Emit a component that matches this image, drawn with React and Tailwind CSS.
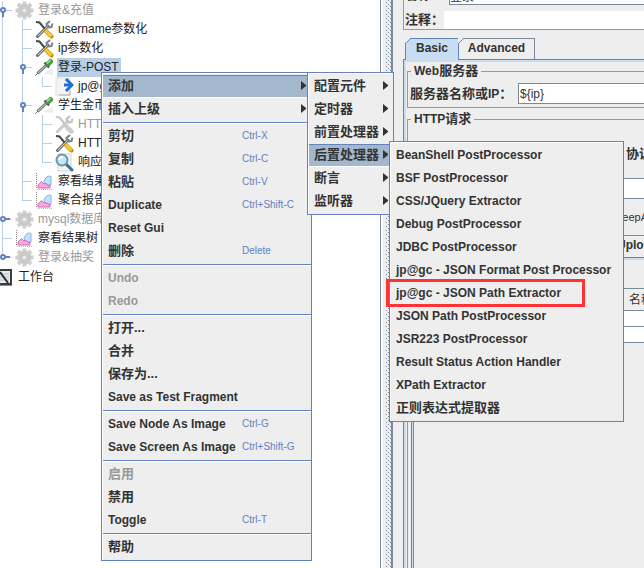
import clsx from "clsx";

/* ---------- tree icons ---------- */

const GearIcon = () => (
  <svg width="19" height="19" viewBox="0 0 19 19">
    <g stroke="#cfcfcf" strokeWidth="4">
      <path d="M9.500 0.500V18.500M0.500 9.500H18.500M3 3L16 16M16 3L3 16" />
    </g>
    <circle cx="9.500" cy="9.500" r="7" fill="#cfcfcf" />
    <circle cx="9.500" cy="9.500" r="5" fill="none" stroke="#c2c2c2" />
    <circle cx="9.500" cy="9.500" r="2.500" fill="#ececec" stroke="#c2c2c2" />
  </svg>
);

const ToolsIcon = ({ disabled }) => (
  <svg width="19" height="19" viewBox="0 0 19 19" fill="none">
    <path d="M9 15L15 18L18 13Z" fill="#efefef" />
    <path
      d="M2.500 16.500L13 6"
      stroke={disabled ? "#c4c4c4" : "#6a6e71"}
      strokeWidth="3"
      strokeLinecap="round"
    />
    <path
      d="M12 7L11.500 4L15 1M13 7.500L16.500 7L17.500 3.500"
      stroke={disabled ? "#c0c0c0" : "#7d8285"}
      strokeWidth="2"
    />
    <path d="M3 16L12.500 6.500" stroke={disabled ? "#dddddd" : "#d2d6d8"} />
    <path
      d="M1 2L4.500 2.500L9.500 8.500"
      stroke={disabled ? "#c4c4c4" : "#45484a"}
      strokeWidth="2"
    />
    <path
      d="M11 11L16.500 16.500"
      stroke={disabled ? "#c4c4c4" : "#b98a1c"}
      strokeWidth="4"
      strokeLinecap="round"
    />
    <path
      d="M10.500 10.500L16.500 16.500"
      stroke={disabled ? "#cecece" : "#fbcb22"}
      strokeWidth="3"
    />
  </svg>
);

const DropperIcon = () => (
  <svg width="19" height="19" viewBox="0 0 19 19" fill="none">
    <path d="M8 16L18 10V17Z" fill="#eeeeee" />
    <path d="M0.500 17.500L3 15" stroke="#777777" strokeLinecap="round" />
    <path d="M2.500 15.500L11 7.500" stroke="#6c756e" strokeWidth="3" />
    <path d="M3 15L11 7.500" stroke="#d5dfd6" />
    <path d="M9.500 4.500L14 9.500" stroke="#3a453b" strokeWidth="2" />
    <path
      d="M13 6L15.500 3.500"
      stroke="#4a9444"
      strokeWidth="5"
      strokeLinecap="round"
    />
    <path d="M12.500 5L15 2.500" stroke="#93d184" strokeLinecap="round" strokeWidth="2" />
  </svg>
);

const ExtractIcon = () => (
  <svg width="19" height="19" viewBox="0 0 19 19" fill="none">
    <path d="M1 1H15V18H1Z" fill="#f4f4f4" stroke="#dddddd" />
    <path d="M15 14V18H4" stroke="#a8a8a8" />
    <path d="M9 8H15" stroke="#1c6fd0" strokeWidth="3" />
    <path d="M11 2L17 8L11 14" stroke="#1c6fd0" strokeWidth="3" />
  </svg>
);

const MagnifierIcon = () => (
  <svg width="19" height="19" viewBox="0 0 19 19" fill="none">
    <path d="M3 1H16V18H3Z" fill="#f3f3f3" stroke="#d4d4d4" />
    <path d="M11 11L17 17" stroke="#3f6f95" strokeWidth="3" strokeLinecap="round" />
    <circle cx="7" cy="7" r="5.500" fill="#c3e6f8" stroke="#7195ad" strokeWidth="2" />
    <path d="M4 7Q5 4 8 4" stroke="#ffffff" strokeWidth="2" />
  </svg>
);

const ChartIcon = () => (
  <svg width="19" height="19" viewBox="0 0 19 19" fill="none">
    <path d="M1.500 1V17" stroke="#888888" strokeDasharray="1 1" />
    <path d="M2 17.500H17" stroke="#bbbbbb" strokeDasharray="1 1" />
    <path
      d="M9 9L11 5.500L14 4L16 4.500V13L10 13Z"
      fill="#c4e0fa"
      stroke="#82b4e6"
    />
    <path
      d="M3 16V13L6.500 9.500L9 12L11 11.500L14 14L15 13V16Z"
      fill="#f7a8de"
      stroke="#d768b2"
    />
  </svg>
);

const WorkbenchIcon = () => (
  <svg width="14" height="19" viewBox="0 0 14 19" fill="none">
    <path d="M0 1H12V18H0Z" fill="#3d3d3d" />
    <path d="M0 3H10V15H0Z" fill="#e3ebf0" />
    <path d="M0 6H9M0 9H9M0 12H9" stroke="#b3c2cc" />
    <path d="M0 4L8 15" stroke="#2b2b2b" strokeWidth="2" />
    <path d="M0 17.500H12" stroke="#8c8c8c" />
  </svg>
);

const icons = {
  gear: <GearIcon />,
  tools: <ToolsIcon />,
  toolsOff: <ToolsIcon disabled />,
  dropper: <DropperIcon />,
  extract: <ExtractIcon />,
  magnifier: <MagnifierIcon />,
  chart: <ChartIcon />,
  workbench: <WorkbenchIcon />,
};

/* ---------- tree ---------- */

// guides: one letter per column, v = through, t = branch, e = last branch
const treeRows = [
  { guides: "t", handle: "open", icon: "gear", text: "登录&充值", disabled: true },
  { guides: "vt", icon: "tools", text: "username参数化" },
  { guides: "vt", icon: "tools", text: "ip参数化" },
  { guides: "vt", handle: "open", icon: "dropper", text: "登录-POST", selected: true },
  { guides: "vve", icon: "extract", text: "jp@gc" },
  { guides: "vt", handle: "open", icon: "dropper", text: "学生金币" },
  { guides: "vvt", icon: "toolsOff", text: "HTTP", disabled: true },
  { guides: "vvt", icon: "tools", text: "HTTP" },
  { guides: "vve", icon: "magnifier", text: "响应断言" },
  { guides: "vt", icon: "chart", text: "察看结果树" },
  { guides: "ve", icon: "chart", text: "聚合报告" },
  { guides: "t", handle: "closed", icon: "gear", text: "mysql数据库", disabled: true },
  { guides: "t", icon: "chart", text: "察看结果树" },
  { guides: "e", handle: "closed", icon: "gear", text: "登录&抽奖", disabled: true },
  { guides: "", icon: "workbench", text: "工作台" },
];

const Guide = ({ kind, first, handle }) => {
  const x = first ? 2 : 7;
  return (
    <svg width={first ? 15 : 20} height="19" className="shrink-0">
      <rect x={x} y="0" width="1" height={kind === "e" ? 10 : 19} fill="#b8cfe5" />
      {kind !== "v" && <rect x={x} y="9" width="10" height="1" fill="#b8cfe5" />}
      {handle && (
        <g>
          {handle === "open" ? (
            <rect x={x} y="11" width="2" height="5" fill="#6382bf" />
          ) : (
            <rect x={x + 2} y="8" width="6" height="2" fill="#6382bf" />
          )}
          <circle cx={x + 1} cy="9" r="2" fill="#fff" stroke="#6382bf" strokeWidth="2" />
        </g>
      )}
    </svg>
  );
};

const TreeRow = ({ row }) => (
  <li className="flex h-[19px] items-center whitespace-nowrap last:mt-px">
    {row.guides.split("").map((kind, i) => (
      <Guide
        key={i}
        kind={kind}
        first={i === 0}
        handle={i === row.guides.length - 1 ? row.handle : null}
      />
    ))}
    <span className="mr-[3px] shrink-0">{icons[row.icon]}</span>
    <span
      className={clsx(
        "px-px leading-[19px]",
        row.selected && "bg-[#b8cfe5] pr-[2px]",
        row.disabled ? "text-[#999999]" : "text-[#222222]"
      )}
    >
      {row.text}
    </span>
  </li>
);

/* ---------- popup menus ---------- */

const mainMenu = [
  [
    { text: "添加", cjk: true, sub: true, active: true },
    { text: "插入上级", cjk: true, sub: true },
  ],
  [
    { text: "剪切", cjk: true, keys: "Ctrl-X" },
    { text: "复制", cjk: true, keys: "Ctrl-C" },
    { text: "粘贴", cjk: true, keys: "Ctrl-V" },
    { text: "Duplicate", keys: "Ctrl+Shift-C" },
    { text: "Reset Gui" },
    { text: "删除", cjk: true, keys: "Delete" },
  ],
  [
    { text: "Undo", disabled: true },
    { text: "Redo", disabled: true },
  ],
  [
    { text: "打开...", cjk: true },
    { text: "合并", cjk: true },
    { text: "保存为...", cjk: true },
    { text: "Save as Test Fragment" },
  ],
  [
    { text: "Save Node As Image", keys: "Ctrl-G" },
    { text: "Save Screen As Image", keys: "Ctrl+Shift-G" },
  ],
  [
    { text: "启用", cjk: true, disabled: true },
    { text: "禁用", cjk: true },
    { text: "Toggle", keys: "Ctrl-T" },
  ],
  [{ text: "帮助", cjk: true }],
];

const addMenu = [
  [
    { text: "配置元件", cjk: true, sub: true },
    { text: "定时器", cjk: true, sub: true },
    { text: "前置处理器", cjk: true, sub: true },
    { text: "后置处理器", cjk: true, sub: true, active: true },
    { text: "断言", cjk: true, sub: true },
    { text: "监听器", cjk: true, sub: true },
  ],
];

const postProcessorMenu = [
  [
    { text: "BeanShell PostProcessor" },
    { text: "BSF PostProcessor" },
    { text: "CSS/JQuery Extractor" },
    { text: "Debug PostProcessor" },
    { text: "JDBC PostProcessor" },
    { text: "jp@gc - JSON Format Post Processor" },
    { text: "jp@gc - JSON Path Extractor" },
    { text: "JSON Path PostProcessor" },
    { text: "JSR223 PostProcessor" },
    { text: "Result Status Action Handler" },
    { text: "XPath Extractor" },
    { text: "正则表达式提取器", cjk: true },
  ],
];

const MenuItem = ({ item }) => (
  <li role="none">
    <button
      role="menuitem"
      disabled={item.disabled}
      className={clsx(
        "flex h-[23px] w-full items-center border-y px-[5px] pb-[2px] text-left whitespace-nowrap",
        item.active
          ? "border-t-[#6382bf] border-b-white bg-[#a3b8cc]"
          : "border-transparent",
        item.disabled ? "text-[#999999]" : "text-[#333333]"
      )}
    >
      <span className={clsx("flex-1 font-bold", item.cjk ? "text-[13px]" : "text-xs")}>
        {item.text}
      </span>
      {item.keys && (
        <span className="w-16 text-[10px] text-[#6382bf]">{item.keys}</span>
      )}
      {item.sub && (
        <svg width="5" height="9" viewBox="0 0 5 9">
          <path d="M0 0L5 4V5L0 9Z" fill="#333333" />
        </svg>
      )}
    </button>
  </li>
);

const Menu = ({ groups, label, className }) => (
  <div
    role="menu"
    aria-label={label}
    className={clsx("absolute border border-[#6382bf] bg-[#eeeeee]", className)}
  >
    <div className="border-t border-l border-white pt-px pb-px">
      {groups.map((group, i) => (
        <div key={i}>
          {i > 0 && (
            <div className="py-px">
              <div className="h-[2px] border-t border-[#6382bf] bg-white" />
            </div>
          )}
          <ul role="none">
            {group.map((item) => (
              <MenuItem key={item.text} item={item} />
            ))}
          </ul>
        </div>
      ))}
    </div>
  </div>
);

/* ---------- right side form ---------- */

const Tab = ({ children, selected, className }) => (
  <button
    role="tab"
    aria-selected={selected}
    className={clsx(
      "relative border-t border-r pb-[3px] text-xs font-bold",
      selected
        ? "h-[22px] border-l border-[#6382bf] bg-[#c8ddf2]"
        : "mb-px h-[21px] border-[#7a8a99]",
      className
    )}
  >
    {/* cut corner */}
    <svg width="7" height="7" className="absolute -top-px -left-px">
      <path d="M0 0H6L0 6Z" fill="#eeeeee" />
      <path d="M0 6L6 0" stroke={selected ? "#6382bf" : "#7a8a99"} />
    </svg>
    {children}
  </button>
);

const Splitter = () => (
  <div className="flex w-[13px] shrink-0 border-l border-[#7a8a99] bg-[#eeeeee]">
    <div className="w-[2px] bg-white" />
    <svg className="h-auto flex-1">
      <defs>
        <pattern id="grip" width="4" height="4" patternUnits="userSpaceOnUse">
          <rect x="1" y="0" width="1" height="1" fill="#7a8a99" />
          <rect x="3" y="2" width="1" height="1" fill="#7a8a99" />
        </pattern>
      </defs>
      <rect x="2" width="6" height="100%" fill="url(#grip)" />
    </svg>
    <div className="w-[2px] bg-[#7a8a99]" />
  </div>
);

const ParamTable = () => (
  <table className="w-full border-collapse text-left text-xs">
    <thead>
      <tr className="h-[22px] border-y border-[#7a8a99]">
        <th className="p-0 pl-[215px] font-normal whitespace-nowrap">名称:</th>
      </tr>
    </thead>
    <tbody className="bg-white">
      <tr className="h-4 border-b border-[#7a8a99]">
        <td className="p-0" />
      </tr>
      <tr className="h-4 border-b border-[#7a8a99]">
        <td className="p-0" />
      </tr>
    </tbody>
  </table>
);

const RequestForm = () => (
  <main className="flex min-w-0 flex-1 flex-col overflow-hidden pl-[10px] whitespace-nowrap">
    {/* Name and comments */}
    <div className="border-b border-l border-[#999999]">
      <div className="-mt-[15px] flex h-5 items-center">
        <label htmlFor="name" className="w-[45px] pl-px text-[13px] font-bold">
          名称：
        </label>
        <input
          id="name"
          defaultValue="登录"
          className="h-5 min-w-0 flex-1 border border-r-0 border-[#7a8a99] bg-white text-xs"
        />
      </div>
      <div className="mt-[6px] flex h-[18px] items-center">
        <label htmlFor="comments" className="w-10 pl-px text-[13px] font-bold">
          注释：
        </label>
        <input id="comments" className="h-[18px] min-w-0 flex-1 bg-white text-xs" />
      </div>
    </div>

    {/* Tabs */}
    <div role="tablist" className="z-10 mt-2 -mb-px flex pl-[2px]">
      <Tab selected className="w-[54px]">
        Basic
      </Tab>
      <Tab className="w-[76px]">Advanced</Tab>
    </div>

    <div className="flex flex-1 flex-col border-t border-l border-[#6382bf]">
      <div className="flex flex-1 flex-col border-t-2 border-l-2 border-[#c8ddf2] pl-px">
        <fieldset className="border border-r-0 border-[#999999] pb-[3px]">
          <legend className="ml-[3px] flex h-[18px] items-center px-[3px] text-xs font-bold">
            Web<span className="text-[13px]">服务器</span>
          </legend>
          <div className="mt-[3px] flex h-[21px] items-center pl-[2px]">
            <label htmlFor="server" className="w-[108px] text-[13px] font-bold">
              服务器名称或<span className="text-xs">IP</span>：
            </label>
            <input
              id="server"
              defaultValue="${ip}"
              className="h-[21px] min-w-0 flex-1 border border-r-0 border-[#7a8a99] bg-white pl-px text-xs"
            />
          </div>
        </fieldset>

        <fieldset className="mt-[2px] flex-1 border border-r-0 border-b-0 border-[#999999]">
          <legend className="ml-[3px] flex h-[18px] items-center px-[3px] text-xs font-bold">
            HTTP<span className="text-[13px]">请求</span>
          </legend>
          <div className="flex h-full flex-col">
            <label
              htmlFor="path"
              className="mt-[14px] h-6 pl-[218px] text-[13px] leading-6 font-bold"
            >
              协议：
            </label>
            <input
              id="path"
              className="mt-3 h-[21px] w-full border border-r-0 border-[#7a8a99] bg-white text-xs"
            />
            <label className="flex h-9 items-center gap-1 pl-[191px] text-[11px]">
              <input type="checkbox" className="size-3" />
              KeepAlive
            </label>
            <div role="tablist" className="flex pl-[203px]">
              <Tab className="w-[130px] shrink-0 pl-[6px] text-left">
                Upload
              </Tab>
            </div>
            <div className="ml-[3px] flex-1 border-t border-l border-[#6382bf]">
              <div className="h-full border-t-2 border-l border-[#c8ddf2]">
                <div className="h-full border-l border-[#7a8a99] pt-7">
                  <ParamTable />
                </div>
              </div>
            </div>
          </div>
        </fieldset>
      </div>
    </div>
  </main>
);

export default function App() {
  return (
    <div className="relative flex min-h-screen overflow-hidden bg-[#eeeeee] font-['Liberation_Sans','Noto_Sans_CJK_SC',sans-serif] text-xs text-[#333333]">
      <nav aria-label="Test plan" className="w-[380px] shrink-0 bg-white pt-px">
        <ul>
          {treeRows.map((row, i) => (
            <TreeRow key={i} row={row} />
          ))}
        </ul>
      </nav>
      <Splitter />
      <RequestForm />

      <Menu
        label="Node"
        groups={mainMenu}
        className="top-[72px] left-[101px] w-[211px]"
      />
      <Menu
        label="添加"
        groups={addMenu}
        className="top-[72px] left-[307px] w-[87px]"
      />
      <Menu
        label="后置处理器"
        groups={postProcessorMenu}
        className="top-[141px] left-[389px] w-[235px]"
      />

      {/* Highlight frame around the JSON Path Extractor entry */}
      <div className="pointer-events-none absolute top-[279px] left-[386px] h-7 w-[199px] border-3 border-[#ff3333]" />
    </div>
  );
}
